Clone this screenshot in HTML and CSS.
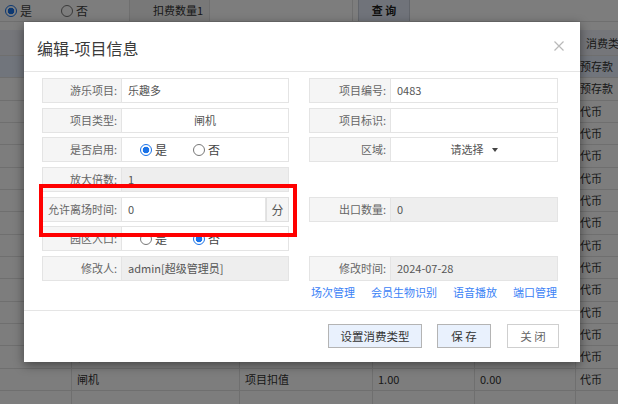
FILE: index.html
```html
<!DOCTYPE html>
<html lang="zh-CN">
<head>
<meta charset="utf-8">
<title>编辑-项目信息</title>
<link rel="stylesheet" href="styles.css">
</head>
<body>
<div class="page">
  <div class="toolbar">
    <div class="tb-radios">
      <label class="opt"><span class="radio on"></span>是</label>
      <label class="opt opt2"><span class="radio"></span>否</label>
    </div>
    <div class="tb-label">扣费数量1</div>
    <div class="tb-input"></div>
    <div class="tb-btn">查 询</div>
  </div>
  <div class="table">
    <div class="trow thead"><div></div><div></div><div></div><div></div><div></div><div>消费类型</div></div>
    <div class="trow sel"><div></div><div></div><div></div><div></div><div></div><div>预存款</div></div>
    <div class="trow"><div></div><div></div><div></div><div></div><div></div><div>预存款</div></div>
    <div class="trow"><div></div><div></div><div></div><div></div><div></div><div>代币</div></div>
    <div class="trow"><div></div><div></div><div></div><div></div><div></div><div>代币</div></div>
    <div class="trow"><div></div><div></div><div></div><div></div><div></div><div>代币</div></div>
    <div class="trow"><div></div><div></div><div></div><div></div><div></div><div>代币</div></div>
    <div class="trow"><div></div><div></div><div></div><div></div><div></div><div>代币</div></div>
    <div class="trow"><div></div><div></div><div></div><div></div><div></div><div>代币</div></div>
    <div class="trow"><div></div><div></div><div></div><div></div><div></div><div>代币</div></div>
    <div class="trow"><div></div><div></div><div></div><div></div><div></div><div>代币</div></div>
    <div class="trow"><div></div><div></div><div></div><div></div><div></div><div>代币</div></div>
    <div class="trow"><div></div><div></div><div></div><div></div><div></div><div>代币</div></div>
    <div class="trow"><div></div><div></div><div></div><div></div><div></div><div>代币</div></div>
    <div class="trow"><div></div><div>检票机</div><div>项目扣值</div><div>1.00</div><div>0.00</div><div>代币</div></div>
    <div class="trow"><div></div><div>闸机</div><div>项目扣值</div><div>1.00</div><div>0.00</div><div>代币</div></div>
    <div class="trow"><div></div><div></div><div></div><div></div><div></div><div></div></div>
  </div>
</div>
<div class="mask"></div>

<div class="modal">
  <div class="modal-head">
    <div class="modal-title">编辑-项目信息</div>
    <svg class="close" width="10" height="10" viewBox="0 0 10 10"><path d="M0.5 0.5L9.5 9.5M9.5 0.5L0.5 9.5" stroke="#b9b9b9" stroke-width="1.2" fill="none"/></svg>
  </div>
  <div class="modal-body">
    <div class="form">
      <div class="field"><div class="lbl">游乐项目:</div><div class="val">乐趣多</div></div>
      <div class="field"><div class="lbl">项目编号:</div><div class="val">0483</div></div>

      <div class="field"><div class="lbl">项目类型:</div><div class="val center">闸机</div></div>
      <div class="field"><div class="lbl">项目标识:</div><div class="val"></div></div>

      <div class="field"><div class="lbl">是否启用:</div><div class="val radios"><label class="opt"><span class="radio on"></span>是</label><label class="opt"><span class="radio"></span>否</label></div></div>
      <div class="field"><div class="lbl">区域:</div><div class="val center">请选择<span class="caret"></span></div></div>

      <div class="field"><div class="lbl">放大倍数:</div><div class="val ro">1</div></div>
      <div class="empty"></div>

      <div class="field"><div class="lbl">允许离场时间:</div><div class="val">0</div><div class="addon">分</div></div>
      <div class="field"><div class="lbl">出口数量:</div><div class="val ro">0</div></div>

      <div class="field"><div class="lbl">园区入口:</div><div class="val radios"><label class="opt"><span class="radio"></span>是</label><label class="opt"><span class="radio on"></span>否</label></div></div>
      <div class="empty"></div>

      <div class="field"><div class="lbl">修改人:</div><div class="val ro">admin[超级管理员]</div></div>
      <div class="field"><div class="lbl">修改时间:</div><div class="val ro">2024-07-28</div></div>
    </div>
    <div class="links">
      <a class="link">场次管理</a>
      <a class="link">会员生物识别</a>
      <a class="link">语音播放</a>
      <a class="link">端口管理</a>
    </div>
  </div>
  <div class="modal-foot">
    <div class="btn btn-blue btn-wide">设置消费类型</div>
    <div class="btn btn-blue btn-save">保 存</div>
    <div class="btn btn-white btn-close">关 闭</div>
  </div>
</div>

<div class="highlight"></div>
</body>
</html>
```

FILE: styles.css
```css
* { box-sizing: border-box; }
html, body {
  margin: 0;
  padding: 0;
}
body {
  width: 618px;
  height: 404px;
  overflow: hidden;
  position: relative;
  font-family: "Noto Sans CJK SC", "Noto Sans", sans-serif;
  font-size: 11px;
  color: #333;
  background: #fff;
}

/* ---------- background page ---------- */
.page {
  width: 660px;
}
.toolbar {
  display: flex;
  height: 22px;
  border-bottom: 1px solid #e3e3e3;
  align-items: stretch;
}
.tb-radios {
  width: 130px;
  display: flex;
  align-items: center;
  padding-left: 5px;
  font-size: 12px;
  border-right: 1px solid #e3e3e3;
}
.tb-radios .opt2 { margin-left: 29px; }
.tb-label {
  width: 80px;
  background: #f4f4f4;
  border-right: 1px solid #e3e3e3;
  text-align: right;
  padding-right: 6px;
  line-height: 21px;
}
.tb-input {
  width: 143px;
  border-right: 1px solid #e3e3e3;
}
.tb-btn {
  margin-left: 5px;
  width: 52px;
  background: #e4ebf8;
  border-left: 1px solid #c9cfdb;
  border-right: 1px solid #c9cfdb;
  text-align: center;
  line-height: 21px;
  font-weight: bold;
  color: #222;
}
.table {
  margin-top: 8px;
}
.trow {
  display: grid;
  grid-template-columns: 72px 168px 133px 102px 101px 84px;
  height: 22.35px;
  border-bottom: 1px solid #e2e2e2;
}
.trow > div {
  border-right: 1px solid #e2e2e2;
  padding-left: 5px;
  line-height: 21px;
  white-space: nowrap;
  overflow: hidden;
}
.trow > div:last-child { padding-left: 4px; }
.thead {
  height: 26px;
  background: #eef1f8;
}
.thead > div {
  text-align: center;
  line-height: 26px;
  padding-left: 0;
}
.thead > div:last-child { padding-left: 10px; text-align: left; }
.sel { background: #e6eefc; }

.mask {
  position: absolute;
  inset: 0;
  background: rgba(0, 0, 0, 0.51);
}

/* ---------- modal ---------- */
.modal {
  position: absolute;
  left: 24px;
  top: 22px;
  width: 556px;
  height: 340px;
  background: #fff;
  box-shadow: 0 3px 10px rgba(0, 0, 0, 0.45);
  display: flex;
  flex-direction: column;
}
.modal-head {
  height: 50px;
  flex: none;
  border-bottom: 1px solid #e5e5e5;
  display: flex;
  align-items: center;
  justify-content: space-between;
  padding: 2px 16px 0 13px;
}
.modal-title {
  font-size: 16px;
  color: #3a3a3a;
}
.close { display: block; margin-top: -4px; }

.modal-body {
  flex: 1;
  padding: 6px 22px 0 18px;
}
.form {
  display: grid;
  grid-template-columns: 247px 249px;
  grid-auto-rows: 25px;
  column-gap: 20px;
  row-gap: 4.67px;
}
.field {
  display: flex;
  height: 25px;
}
.lbl {
  width: 80px;
  flex: none;
  background: #f5f5f5;
  border: 1px solid #e4e4e4;
  text-align: right;
  padding-right: 4px;
  line-height: 23px;
  color: #666;
  white-space: nowrap;
}
.field:nth-child(even) .lbl { width: 82px; }
.val {
  flex: 1;
  border: 1px solid #e4e4e4;
  border-left: none;
  line-height: 23px;
  padding-left: 6px;
  color: #555;
  white-space: nowrap;
}
.val.ro { background: #eeeeee; }
.val.center {
  text-align: center;
  padding-left: 0;
}
.caret {
  display: inline-block;
  width: 0;
  height: 0;
  border-left: 3px solid transparent;
  border-right: 3px solid transparent;
  border-top: 4px solid #444;
  margin-left: 8px;
  vertical-align: middle;
  position: relative;
  top: -1px;
}
.addon {
  width: 23px;
  flex: none;
  background: #f5f5f5;
  border: 1px solid #e0e0e0;
  text-align: center;
  line-height: 23px;
  color: #555;
  font-size: 12px;
}
.val.radios {
  display: flex;
  align-items: center;
  padding-left: 18px;
  gap: 26px;
}
.opt {
  display: inline-flex;
  align-items: center;
  gap: 3px;
  color: #444;
  font-size: 12px;
  line-height: 1;
}
.radio {
  width: 12px;
  height: 12px;
  border-radius: 50%;
  border: 1px solid #777;
  background: #fff;
  display: inline-block;
  flex: none;
}
.radio.on {
  border-color: #1a73e8;
  background: radial-gradient(circle, #1a73e8 0 3px, #fff 3.6px);
}
.empty { height: 25px; }

.links {
  display: flex;
  justify-content: flex-end;
  gap: 16px;
  padding-right: 1px;
  margin-top: 4px;
  line-height: 14px;
}
.link {
  color: #3b82f6;
  font-size: 11px;
}

.modal-foot {
  height: 52px;
  flex: none;
  border-top: 1px solid #e5e5e5;
  display: flex;
  align-items: center;
  justify-content: flex-end;
  padding: 0 21px 2px 0;
  gap: 15px;
}
.btn {
  height: 24px;
  line-height: 22px;
  text-align: center;
  font-size: 11.5px;
  border: 1px solid #b4b4b4;
  color: #333;
}
.btn-blue { background: #e9f1fd; }
.btn-white { background: #fff; border-color: #cfcfcf; color: #666; }
.btn-wide { width: 94px; }
.btn-save { width: 54px; }
.btn-close { width: 52px; margin-left: 1px; }

.highlight {
  position: absolute;
  left: 39px;
  top: 184px;
  width: 258px;
  height: 53px;
  border: 4px solid #ff0000;
}
```
